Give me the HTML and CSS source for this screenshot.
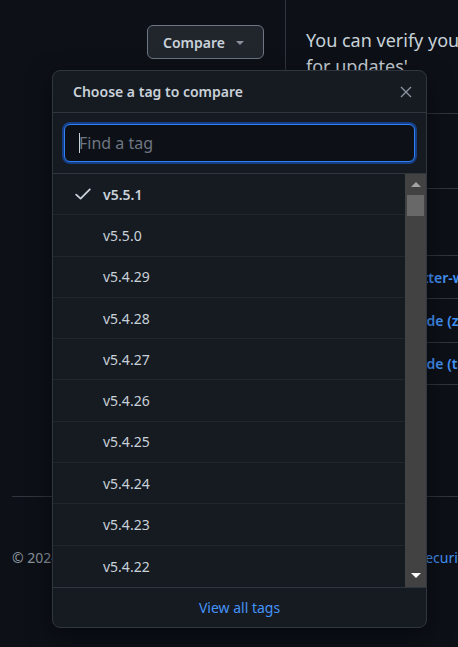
FILE: index.html
```html
<!DOCTYPE html>
<html lang="en">
<head>
<meta charset="utf-8">
<title>Compare tags</title>
<link rel="stylesheet" href="styles.css">
</head>
<body>
<div class="page">
  <div class="top">
    <div class="left-col">
      <button class="btn" type="button">Compare
        <svg class="caret" viewBox="0 0 16 16" width="16" height="16"><path d="m4.427 7.427 3.396 3.396a.25.25 0 0 0 .354 0l3.396-3.396A.25.25 0 0 0 11.396 7H4.604a.25.25 0 0 0-.177.427Z"/></svg>
      </button>
    </div>
    <div class="right-col">
      <p class="lead"><span class="line">You can verify your downloads by checking the releases page</span><span class="line">for updates'</span></p>
      <div class="sep sep-a"></div>
      <div class="block"></div>
      <div class="assets">
        <div class="asset-head"></div>
        <div class="asset"><a href="#">demo-flutter-win.zip</a></div>
        <div class="asset"><a href="#">Source code (zip)</a></div>
        <div class="asset"><a href="#">Source code (tar.gz)</a></div>
      </div>
    </div>
  </div>
  <footer class="footer">
    <span class="copy">© 2024 GitHub, Inc.</span>
    <a class="foot-link" href="#">Security</a>
  </footer>

  <div class="dropdown">
    <div class="dd-head">
      <span class="dd-title">Choose a tag to compare</span>
      <svg class="close" viewBox="0 0 12 12" width="12" height="12"><path d="M1 1L11 11M11 1L1 11"/></svg>
    </div>
    <div class="dd-filter">
      <div class="input"><span class="cursor"></span><span class="ph">Find a tag</span></div>
    </div>
    <div class="dd-body">
      <div class="list">
        <div class="row selected"><svg class="check" viewBox="0 0 16 16" width="16" height="16"><path d="M1.2 8.6 5.6 12.6 14.8 3.4"/></svg><span>v5.5.1</span></div>
        <div class="row"><span class="nocheck"></span><span>v5.5.0</span></div>
        <div class="row"><span class="nocheck"></span><span>v5.4.29</span></div>
        <div class="row"><span class="nocheck"></span><span>v5.4.28</span></div>
        <div class="row"><span class="nocheck"></span><span>v5.4.27</span></div>
        <div class="row"><span class="nocheck"></span><span>v5.4.26</span></div>
        <div class="row"><span class="nocheck"></span><span>v5.4.25</span></div>
        <div class="row"><span class="nocheck"></span><span>v5.4.24</span></div>
        <div class="row"><span class="nocheck"></span><span>v5.4.23</span></div>
        <div class="row last"><span class="nocheck"></span><span>v5.4.22</span></div>
      </div>
      <div class="scrollbar">
        <span class="arrow up"></span>
        <span class="thumb"></span>
        <span class="track"></span>
        <span class="arrow down"></span>
      </div>
    </div>
    <div class="dd-foot"><a href="#">View all tags</a></div>
  </div>
</div>
</body>
</html>
```

FILE: styles.css
```css
* { box-sizing: border-box; }
html, body { margin: 0; padding: 0; }
body {
  background: #0d1117;
  color: #c9d1d9;
  font-family: "Noto Sans", "Open Sans", sans-serif;
  width: 458px;
  height: 647px;
  overflow: hidden;
}
a { color: #4493f8; text-decoration: none; }

.page { position: relative; width: 458px; height: 647px; overflow: hidden; }

.top { display: flex; height: 496px; }
.left-col {
  width: 286px;
  flex: none;
  border-right: 1px solid #30363d;
  display: flex;
  justify-content: flex-end;
  align-items: flex-start;
  padding: 25px 21px 0 0;
  height: 420px;
}
.btn {
  display: flex;
  align-items: center;
  gap: 7px;
  height: 34px;
  width: 117px;
  padding: 0 0 0 15px;
  background: #21262d;
  border: 1px solid #6e7681;
  border-radius: 6px;
  color: #c9d1d9;
  font-family: inherit;
  font-size: 14px;
  font-weight: 600;
}
.caret { fill: #8b949e; width: 16px; height: 16px; }

.right-col { flex: 1; min-width: 0; padding-left: 20px; overflow: hidden; }
.lead {
  margin: 27px 0 0;
  font-size: 18px;
  line-height: 26px;
  color: #c9d1d9;
  white-space: nowrap;
}
.line { display: block; }
.sep-a { border-top: 1px solid #30363d; margin-top: 34px; margin-left: -20px; }
.block { height: 74px; }
.assets { border-top: 1px solid #30363d; margin-left: -20px; }
.asset-head { height: 66px; }
.asset {
  height: 43.3px;
  border-top: 1px solid #30363d;
  display: flex;
  align-items: center;
  padding-left: 75px;
  white-space: nowrap;
  font-size: 14px;
  font-weight: 600;
}
.asset:last-child { border-bottom: 1px solid #30363d; }

.footer {
  margin-left: 12px;
  border-top: 1px solid #30363d;
  display: flex;
  justify-content: space-between;
  padding-top: 51px;
  font-size: 14px;
  white-space: nowrap;
}
.copy { color: #8b949e; }
.foot-link { margin-right: -12px; }

.dropdown {
  position: absolute;
  left: 52px;
  top: 70px;
  width: 375px;
  height: 558px;
  background: #161b22;
  border: 1px solid #30363d;
  border-radius: 8px;
  overflow: hidden;
  display: flex;
  flex-direction: column;
  box-shadow: 0 8px 24px rgba(1, 4, 9, 0.6);
}
.dd-head {
  height: 42px;
  flex: none;
  border-bottom: 1px solid #30363d;
  display: flex;
  align-items: center;
  justify-content: space-between;
  padding: 0 14px 0 20px;
}
.dd-title { font-size: 14px; font-weight: 600; color: #c9d1d9; }
.close { stroke: #8b949e; stroke-width: 1.4; fill: none; }

.dd-filter {
  flex: none;
  height: 61px;
  padding: 11px 11px 0 11px;
  border-bottom: 1px solid #30363d;
}
.input {
  height: 38px;
  border: 1px solid #2f81f7;
  box-shadow: 0 0 0 2px #163f86;
  border-radius: 6px;
  background: #0d1117;
  display: flex;
  align-items: center;
  padding-left: 14px;
}
.cursor { width: 1px; height: 20px; background: #c9d1d9; margin-right: -1px; }
.ph { font-size: 16px; color: #6e7681; }

.dd-body { flex: none; height: 413px; display: flex; }
.list { flex: 1; }
.row {
  height: 41.3px;
  border-bottom: 1px solid #21262d;
  display: flex;
  align-items: center;
  padding-left: 22px;
  gap: 12px;
  font-size: 14px;
  color: #c9d1d9;
}
.row.last { border-bottom: none; }
.row.selected { font-weight: 600; }
.check { fill: none; stroke: #c9d1d9; stroke-width: 1.8; stroke-linecap: round; stroke-linejoin: round; flex: none; }
.nocheck { width: 16px; flex: none; }

.scrollbar {
  width: 21px;
  flex: none;
  background: #424242;
  display: flex;
  flex-direction: column;
  align-items: center;
}
.arrow { width: 0; height: 0; border-left: 5px solid transparent; border-right: 5px solid transparent; flex: none; }
.arrow.up { border-bottom: 5px solid #a3a3a3; margin-top: 8px; margin-bottom: 8px; }
.arrow.down { border-top: 5px solid #ffffff; margin-bottom: 9px; }
.thumb { width: 17px; height: 21px; background: #686868; flex: none; }
.track { flex: 1; }

.dd-foot {
  flex: 1;
  border-top: 1px solid #30363d;
  display: flex;
  align-items: center;
  justify-content: center;
  font-size: 14px;
}
```
